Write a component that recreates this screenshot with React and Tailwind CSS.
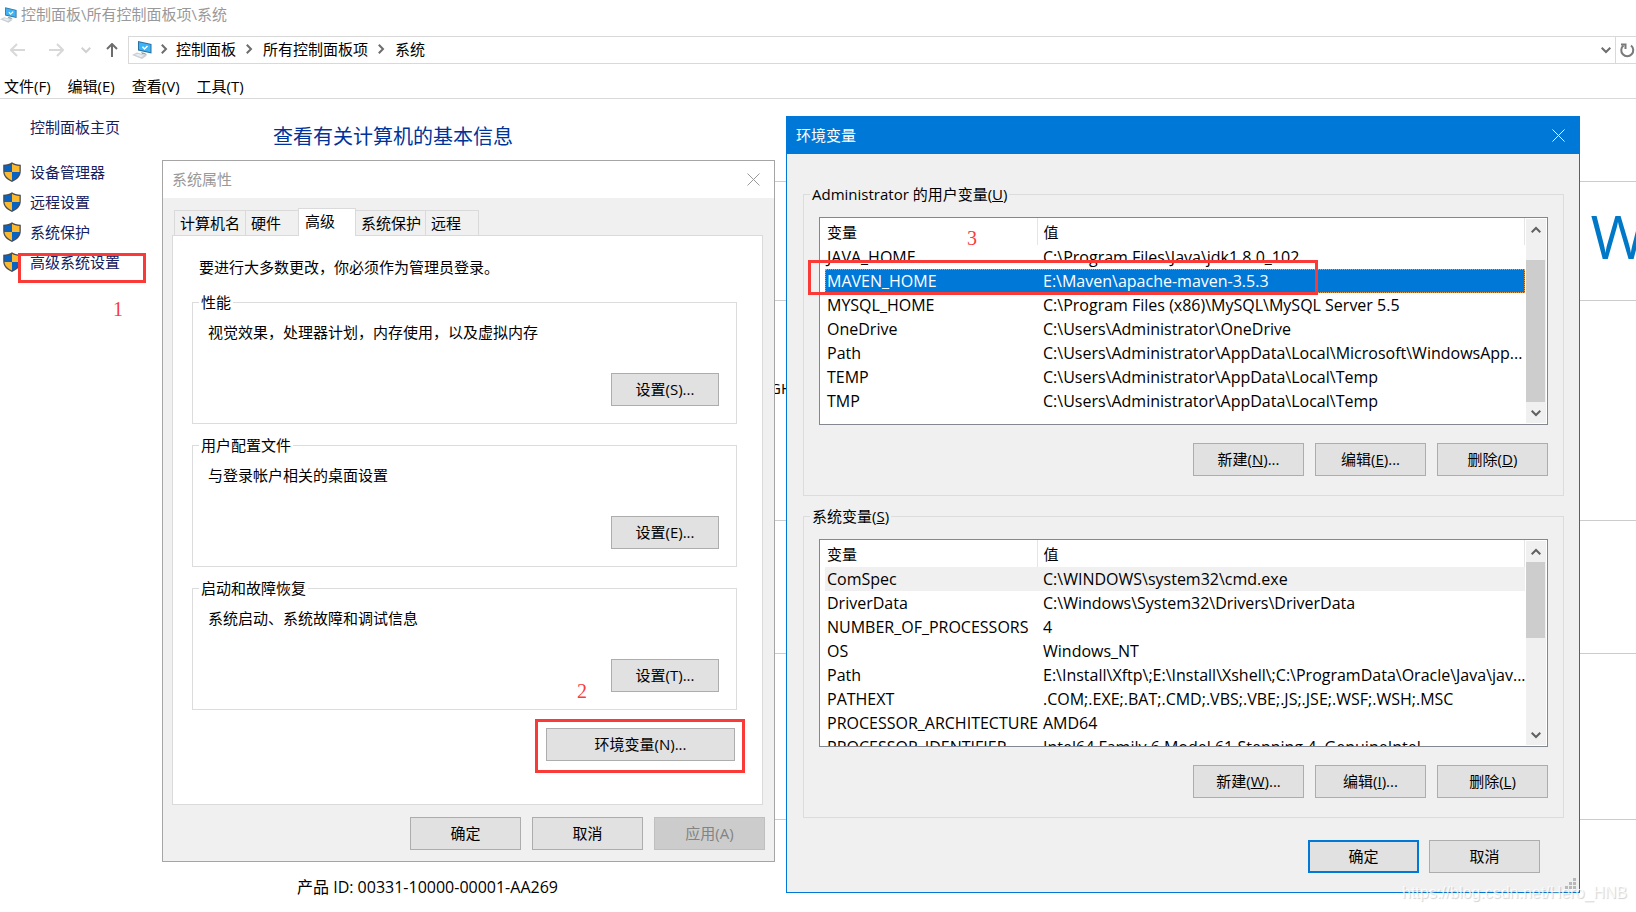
import { useState } from 'react';

const USER_VARS = [
  ['JAVA_HOME', 'C:\\Program Files\\Java\\jdk1.8.0_102'],
  ['MAVEN_HOME', 'E:\\Maven\\apache-maven-3.5.3'],
  ['MYSQL_HOME', 'C:\\Program Files (x86)\\MySQL\\MySQL Server 5.5'],
  ['OneDrive', 'C:\\Users\\Administrator\\OneDrive'],
  ['Path', 'C:\\Users\\Administrator\\AppData\\Local\\Microsoft\\WindowsApp...'],
  ['TEMP', 'C:\\Users\\Administrator\\AppData\\Local\\Temp'],
  ['TMP', 'C:\\Users\\Administrator\\AppData\\Local\\Temp'],
];

const SYSTEM_VARS = [
  ['ComSpec', 'C:\\WINDOWS\\system32\\cmd.exe'],
  ['DriverData', 'C:\\Windows\\System32\\Drivers\\DriverData'],
  ['NUMBER_OF_PROCESSORS', '4'],
  ['OS', 'Windows_NT'],
  ['Path', 'E:\\Install\\Xftp\\;E:\\Install\\Xshell\\;C:\\ProgramData\\Oracle\\Java\\jav...'],
  ['PATHEXT', '.COM;.EXE;.BAT;.CMD;.VBS;.VBE;.JS;.JSE;.WSF;.WSH;.MSC'],
  ['PROCESSOR_ARCHITECTURE', 'AMD64'],
  ['PROCESSOR_IDENTIFIER', 'Intel64 Family 6 Model 61 Stepping 4, GenuineIntel'],
];

const TABS = [
  { name: '计算机名', className: 'w-[72px]' },
  { name: '硬件', className: 'w-[53px]' },
  { name: '高级', className: 'w-[58px]' },
  { name: '系统保护', className: 'w-[70px]' },
  { name: '远程', className: 'w-[53px]' },
];

const SECTIONS = [
  { title: '性能', text: '视觉效果，处理器计划，内存使用，以及虚拟内存', button: '设置(S)...' },
  { title: '用户配置文件', text: '与登录帐户相关的桌面设置', button: '设置(E)...' },
  { title: '启动和故障恢复', text: '系统启动、系统故障和调试信息', button: '设置(T)...' },
];

const ComputerIcon = ({ className = 'h-[18px] w-5' }) => (
  <svg viewBox="0 0 20 18" className={className} aria-hidden="true">
    <path d="M6 0l13.500 3v9.500L6 9.500z" fill="#2b6f9f" />
    <path d="M7 1.200l11.500 2.600v7.500L7 8.600z" fill="#3db4f5" />
    <path d="M10.500 5.700l2 2.300 3-3" fill="none" stroke="#fff" strokeWidth="1.500" />
    <path d="M9 11l4 1 2 2-5-1z" fill="#9aa3aa" />
    <path d="M0 14l5-2.500 10 3-5 3.500z" fill="#c9cfd4" />
    <path d="M3 13.700l3-1 6 2-3 1.500z" fill="#e9edf0" />
  </svg>
);

const ShieldIcon = () => (
  <svg width="18" height="20" viewBox="0 0 18 20" aria-hidden="true">
    <path d="M9 .2C7 1.700 4 2.700 .2 2.700V9c0 5.300 3.600 8.900 8.800 10.900 5.200-2 8.800-5.600 8.800-10.900V2.700C14 2.700 11 1.700 9 .2z" fill="#4a4d50" />
    <path d="M9 1.700C7 3 4.500 3.800 1.500 4V10H9z" fill="#0a63c0" />
    <path d="M9 1.700c2 1.300 4.500 2.100 7.500 2.300V10H9z" fill="#fdb92e" />
    <path d="M1.500 10H9v8.500C5 16.700 1.800 14 1.500 10z" fill="#fdb92e" />
    <path d="M16.500 10H9v8.500c4-1.800 7.200-4.500 7.500-8.500z" fill="#0a63c0" />
  </svg>
);

const ArrowIcon = ({ className, d = 'M15 7H1M7 1L1 7l6 6' }) => (
  <svg width="16" height="14" viewBox="0 0 16 14" fill="none" stroke="currentColor" strokeWidth="2" className={className} aria-hidden="true">
    <path d={d} />
  </svg>
);

const Chevron = ({ className }) => (
  <svg width="10" height="10" viewBox="0 0 10 10" fill="none" stroke="currentColor" strokeWidth="2" className={className} aria-hidden="true">
    <path d="M.7 2.800L5 7l4.300-4.200" />
  </svg>
);

const CloseIcon = () => (
  <svg width="13" height="13" viewBox="0 0 13 13" fill="none" stroke="currentColor" aria-hidden="true">
    <path d="M.5 .5l12 12M12.500 .5l-12 12" />
  </svg>
);

const Button = ({ className = 'w-[111px] border border-[#adadad]', children, ...props }) => (
  <button type="button" className={`h-[33px] bg-[#e1e1e1] pb-[2px] text-center disabled:bg-[#cccccc] disabled:border-[#bfbfbf] disabled:text-[#838383] ${className}`} {...props}>
    {children}
  </button>
);

const VarList = ({ label, rows, selected, active, thumb }) => (
  <div className="flex h-[208px] overflow-hidden border border-[#828790] bg-white pl-[5px]">
    <div className="relative min-w-0 flex-1">
      <table className="w-full table-fixed border-collapse" aria-label={label}>
        <thead>
          <tr className="h-[27px]">
            <th className="w-[212px] border-r border-[#e5e5e5] p-0 pl-[2px] text-left font-normal">变量</th>
            <th className="border-r border-[#e5e5e5] p-0 pl-[6px] text-left font-normal">值</th>
          </tr>
        </thead>
        <tbody className="text-[16px]">
          {rows.map(([name, value]) => (
            <tr
              key={name}
              className={`h-6 ${name !== selected ? '' : active ? 'bg-[#0078d7] text-white outline-1 -outline-offset-1 outline-dotted outline-[#e59a4c]' : 'bg-[#f0f0f0]'}`}
            >
              <td className="p-0 pl-[2px] whitespace-nowrap">{name}</td>
              <td className="p-0 pl-[6px] whitespace-nowrap">{value}</td>
            </tr>
          ))}
        </tbody>
      </table>
    </div>
    {/* Scroll bar */}
    <div className="my-px mr-px ml-px flex w-5 flex-col items-center bg-[#f0f0f0] text-[#606060]">
      <div className="flex h-[21px] items-center"><Chevron className="rotate-180" /></div>
      <div className="w-full flex-1 pr-px">
        <div className={`bg-[#cdcdcd] ${thumb}`} />
      </div>
      <div className="flex h-[21px] items-center"><Chevron /></div>
    </div>
  </div>
);

const VarGroup = ({ legend, keys, ...list }) => (
  <fieldset className="border border-[#dcdcdc] px-[15px] pb-[19px]">
    <legend className="-ml-[9px] px-[2px] leading-5">{legend}</legend>
    <div className="pt-[13px]">
      <VarList {...list} />
      <div className="flex justify-end gap-[11px] pt-[18px]">
        <Button>新建(<u>{keys[0]}</u>)...</Button>
        <Button>编辑(<u>{keys[1]}</u>)...</Button>
        <Button>删除(<u>{keys[2]}</u>)</Button>
      </div>
    </div>
  </fieldset>
);

const SystemProperties = () => {
  const [tab, setTab] = useState('高级');

  return (
    <section className="absolute top-[160px] left-[162px] w-[613px] border border-[#a5a5a5] bg-[#f0f0f0]">
      <div className="flex h-[37px] items-center justify-between bg-white pr-[14px] pb-px pl-[9px] text-[#999999]">
        <h2>系统属性</h2>
        <button type="button" aria-label="关闭"><CloseIcon /></button>
      </div>
      <div className="pt-[10px] pr-[11px] pl-[9px]">
        <div className="flex items-end pl-[2px]" role="tablist">
          {TABS.map(t => (
            <button
              key={t.name}
              type="button"
              role="tab"
              aria-selected={tab === t.name}
              onClick={() => setTab(t.name)}
              className={`border-t border-r border-[#dadada] text-left whitespace-nowrap first:border-l ${t.className} ${tab === t.name ? 'relative -mb-px -ml-px h-7 border-l bg-white pb-1 pl-[6px]' : 'h-[25px] pl-[5px]'}`}
            >{t.name}</button>
          ))}
        </div>
        <div className="border border-[#dadada] bg-white pt-[21px] pr-[25px] pb-[43px] pl-[19px]">
          <p className="pl-[7px] leading-5">要进行大多数更改，你必须作为管理员登录。</p>
          <div className="flex flex-col gap-[11px] pt-[15px]">
            {SECTIONS.map(s => (
              <fieldset key={s.title} className="border border-[#dcdcdc] pr-[17px] pb-[17px] pl-[15px]">
                <legend className="-ml-[9px] px-[2px] leading-5">{s.title}</legend>
                <p className="pt-[10px] leading-5">{s.text}</p>
                <div className="flex justify-end pt-[31px]">
                  <Button className="w-[108px] border border-[#adadad]">{s.button}</Button>
                </div>
              </fieldset>
            ))}
          </div>
          <div className="flex justify-end pt-[18px] pr-[2px]">
            <Button className="w-[189px] border border-[#adadad]">环境变量(N)...</Button>
          </div>
        </div>
      </div>
      <div className="flex justify-end gap-[11px] pt-3 pr-[9px] pb-[11px]">
        <Button>确定</Button>
        <Button>取消</Button>
        <Button disabled>应用(A)</Button>
      </div>
    </section>
  );
};

const EnvironmentVariables = () => (
  <section className="absolute top-[116px] left-[786px] w-[794px] border border-[#0078d7] bg-[#f0f0f0]">
    <div className="flex h-[37px] items-center justify-between bg-[#0078d7] pr-[14px] pb-px pl-[9px] text-white">
      <h2>环境变量</h2>
      <button type="button" aria-label="关闭"><CloseIcon /></button>
    </div>
    <div className="flex flex-col gap-[10px] pt-[30px] pr-[15px] pl-4">
      <VarGroup
        legend={<>Administrator 的用户变量(<u>U</u>)</>}
        label="用户变量"
        keys={['N', 'E', 'D']}
        rows={USER_VARS}
        selected="MAVEN_HOME"
        active
        thumb="mt-5 h-[142px]"
      />
      <VarGroup
        legend={<>系统变量(<u>S</u>)</>}
        label="系统变量"
        keys={['W', 'I', 'L']}
        rows={SYSTEM_VARS}
        selected="ComSpec"
        thumb="h-[76px]"
      />
    </div>
    <div className="flex justify-end gap-[10px] pt-[22px] pr-[39px] pb-[19px]">
      <Button className="w-[111px] border-2 border-[#0078d7]">确定</Button>
      <Button>取消</Button>
    </div>
    {/* Resize grip */}
    <svg width="12" height="12" viewBox="0 0 12 12" fill="#b8b8b8" className="absolute right-[2px] bottom-[2px]" aria-hidden="true">
      <path d="M8 0h3v3H8zM8 4h3v3H8zM4 4h3v3H4zM8 8h3v3H8zM4 8h3v3H4zM0 8h3v3H0z" />
    </svg>
  </section>
);

export default function App() {
  return (
    <div className="relative flex min-h-screen flex-col overflow-hidden bg-white font-['Open_Sans','Noto_Sans_CJK_SC',sans-serif] text-[15px] leading-5 text-black">
      <header>
        <div className="flex h-[30px] items-center gap-1 pb-[2px] text-[#999999]">
          <ComputerIcon className="mt-[2px] h-4 w-[17px]" />
          <h1>控制面板\所有控制面板项\系统</h1>
        </div>
        <nav className="flex items-center pt-[6px] pl-[10px]" aria-label="导航">
          <button type="button" aria-label="后退" className="text-[#d8d8d8]"><ArrowIcon /></button>
          <button type="button" aria-label="前进" className="ml-[22px] text-[#d8d8d8]"><ArrowIcon className="rotate-180" /></button>
          <button type="button" aria-label="最近" className="ml-[17px] text-[#d0d0d0]"><Chevron /></button>
          <button type="button" aria-label="向上" className="ml-[13px] text-[#6d6d6d]"><ArrowIcon d="M8 14V1M3 6l5-5 5 5" /></button>
          <div className="ml-2 flex h-7 flex-1 items-center border-y border-l border-[#d9d9d9] pb-[2px] pl-[3px]">
            <ComputerIcon className="mt-[2px] h-[18px] w-5" />
            <Chevron className="mx-[7px] -rotate-90 text-[#6d6d6d]" />
            <a href="#control-panel">控制面板</a>
            <Chevron className="mr-[9px] ml-2 -rotate-90 text-[#6d6d6d]" />
            <a href="#all-items">所有控制面板项</a>
            <Chevron className="mr-[9px] ml-2 -rotate-90 text-[#6d6d6d]" />
            <a href="#system">系统</a>
            <button type="button" aria-label="历史" className="mt-[2px] mr-1 ml-auto text-[#6d6d6d]"><Chevron /></button>
            <button type="button" aria-label="刷新" className="-mb-[2px] flex h-[26px] w-[21px] items-center border-l border-[#d9d9d9] pl-1 text-[#7a7a7a]">
              <svg width="15" height="15" viewBox="0 0 15 15" fill="none" stroke="currentColor" strokeWidth="2" aria-hidden="true">
                <path d="M11 2.500a6 6 0 1 1-7.500 0" />
                <path d="M1 1.500h4.500V6" />
              </svg>
            </button>
          </div>
        </nav>
        <div className="flex gap-[17px] border-b border-[#d9d9d9] pt-[11px] pb-px pl-1 leading-[22px]" role="menubar">
          {['文件(F)', '编辑(E)', '查看(V)', '工具(T)'].map(m => (
            <button key={m} type="button" role="menuitem">{m}</button>
          ))}
        </div>
      </header>

      <div className="flex flex-1">
        <aside className="w-[273px] shrink-0 pt-[18px] text-[#15205e]">
          <a href="#home" className="block pl-[30px]">控制面板主页</a>
          <ul className="pt-5">
            {['设备管理器', '远程设置', '系统保护', '高级系统设置'].map(item => (
              <li key={item}>
                <a href="#settings" className="flex h-[30px] items-center gap-[9px] pl-[3px]"><ShieldIcon />{item}</a>
              </li>
            ))}
          </ul>
        </aside>
        <main className="min-w-0 flex-1 pt-[23px]">
          <h2 className="pb-[29px] text-[20px] leading-[30px] text-[#003399]">查看有关计算机的基本信息</h2>
          <div className="flex h-[119px] justify-end border-t border-[#cccccc]">
            <p className="-mr-[10px] pt-6 text-[60px] leading-[60px] text-[#0078c8]">W</p>
          </div>
          <div className="h-[220px] border-t border-[#cccccc] pt-[77px] pl-[497px]">GH</div>
          <div className="h-[133px] border-t border-[#cccccc]" />
          <div className="h-[166px] border-t border-[#cccccc]" />
          <div className="border-t border-[#cccccc] pt-[57px] pl-6 text-[16px]">产品 ID: 00331-10000-00001-AA269</div>
        </main>
      </div>

      <SystemProperties />
      <EnvironmentVariables />

      {/* Step marks */}
      <div className="pointer-events-none font-['Liberation_Serif',serif] text-[20px] text-[#fa3c3c]">
        <div className="absolute top-[253px] left-[18px] h-[30px] w-[128px] border-3 border-[#fa3a37]" />
        <span className="absolute top-[299px] left-[113px]">1</span>
        <div className="absolute top-[719px] left-[535px] h-[54px] w-[210px] border-3 border-[#fa3a37]" />
        <span className="absolute top-[681px] left-[577px]">2</span>
        <div className="absolute top-[260px] left-[808px] h-[35px] w-[510px] border-3 border-[#fa3a37]" />
        <span className="absolute top-[228px] left-[967px]">3</span>
      </div>
      <span className="absolute right-[9px] bottom-[9px] font-['Liberation_Sans',sans-serif] text-[16px] text-white/80 [text-shadow:1px_1px_1px_#00000030]">
        https://blog.csdn.net/Hero_HNB
      </span>
    </div>
  );
}
